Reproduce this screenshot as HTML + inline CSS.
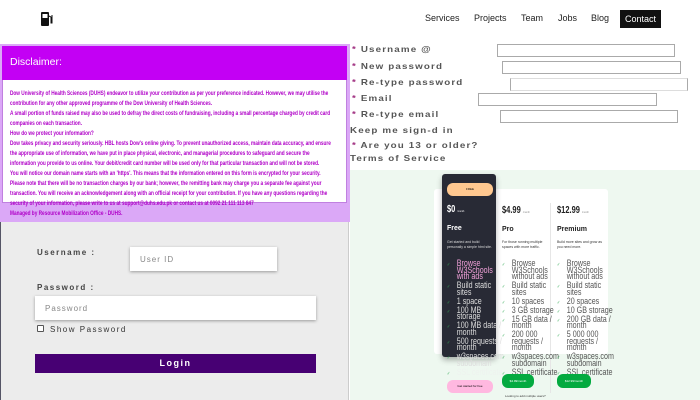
<!DOCTYPE html>
<html><head><meta charset="utf-8"><style>
*{margin:0;padding:0;box-sizing:border-box}
body{width:700px;height:400px;overflow:hidden;background:#fff;font-family:"Liberation Sans",sans-serif;position:relative}
.a{position:absolute}
.nav{font-size:9px;color:#222;top:13px}
.d{font-size:6.4px;line-height:10px;color:#b000c8;transform:scaleX(.74);transform-origin:0 0;width:500px;white-space:nowrap;font-weight:bold}
.lbl{font-size:8px;letter-spacing:1.5px;color:#444;font-weight:bold}
.inp{background:#fff;box-shadow:0 1px 3px rgba(0,0,0,.35);font-size:8px;color:#888;letter-spacing:1px}
.sl{font-size:8.5px;font-weight:bold;color:#555;letter-spacing:1px;transform:scaleX(1.15);transform-origin:0 0}
.sl b{color:#a03080}
.si{border:1px solid #aaa;height:13px;background:#fff}
.f{font-size:9.5px;line-height:6.5px;transform:scaleX(.75);transform-origin:0 0;width:75px}
.f div{margin-bottom:2.5px;position:relative;padding-left:13px}
.f div:before{content:"✓";position:absolute;left:0;font-size:5px;top:1px;color:#3a5}
.p{font-size:10px;font-weight:bold;transform:scaleX(.75);transform-origin:0 0}
.sm{font-size:3.5px;line-height:5px;width:60px}
</style></head><body>
<svg class="a" style="left:40px;top:11px" width="14" height="16" viewBox="0 0 14 16"><rect x="1" y="1" width="8" height="14" rx="1" fill="#111"/><rect x="2.5" y="3" width="5" height="4" fill="#fff"/><path d="M9 5 L11 6 L11 12 L12 12 L12 4" stroke="#111" fill="none" stroke-width="1"/></svg>
<div class="a nav" style="left:425px">Services</div>
<div class="a nav" style="left:474px">Projects</div>
<div class="a nav" style="left:521px">Team</div>
<div class="a nav" style="left:558px">Jobs</div>
<div class="a nav" style="left:591px">Blog</div>
<div class="a" style="left:620px;top:10px;width:41px;height:18px;background:#111;color:#fff;font-size:9px;text-align:center;line-height:18px">Contact</div>

<div class="a" style="left:0;top:44px;width:350px;height:178px;background:#dba8f7"></div>
<div class="a" style="left:2px;top:46px;width:345px;height:157px;background:#fff;border:1px solid #c080e0"></div>
<div class="a" style="left:2px;top:46px;width:345px;height:34px;background:#c300f4"></div>
<div class="a" style="left:10px;top:56px;color:#fff;font-size:10.5px">Disclaimer:</div>
<div class="a d" style="left:10px;top:89px">Dow University of Health Sciences (DUHS) endeavor to utilize your contribution as per your preference indicated. However, we may utilise the<br>contribution for any other approved programme of the Dow University of Health Sciences.<br>A small portion of funds raised may also be used to defray the direct costs of fundraising, including a small percentage charged by credit card<br>companies on each transaction.<br>How do we protect your information?<br>Dow takes privacy and security seriously. HBL hosts Dow's online giving. To prevent unauthorized access, maintain data accuracy, and ensure<br>the appropriate use of information, we have put in place physical, electronic, and managerial procedures to safeguard and secure the<br>information you provide to us online. Your debit/credit card number will be used only for that particular transaction and will not be stored.<br>You will notice our domain name starts with an 'https'. This means that the information entered on this form is encrypted for your security.<br>Please note that there will be no transaction charges by our bank; however, the remitting bank may charge you a separate fee against your<br>transaction. You will receive an acknowledgement along with an official receipt for your contribution. If you have any questions regarding the<br>security of your information, please write to us at support@duhs.edu.pk or contact us at 0092 21 111 113 847<br>Managed by Resource Mobilization Office - DUHS.</div>

<div class="a" style="left:0;top:222px;width:349px;height:178px;background:#ececec;border-left:1px solid #556;border-right:1px solid #ccc"></div>
<div class="a lbl" style="left:37px;top:248px">Username :</div>
<div class="a inp" style="left:130px;top:247px;width:147px;height:24px;padding:8px 10px">User ID</div>
<div class="a lbl" style="left:37px;top:283px">Password :</div>
<div class="a inp" style="left:35px;top:296px;width:281px;height:24px;padding:8px 10px">Password</div>
<div class="a" style="left:37px;top:325px;width:7px;height:7px;border:1px solid #555;border-radius:1px;background:#fff"></div>
<div class="a lbl" style="left:50px;top:325px;font-weight:normal;color:#333">Show Password</div>
<div class="a" style="left:35px;top:354px;width:281px;height:19px;background:#470073;color:#fff;font-size:9px;letter-spacing:1.5px;text-align:center;line-height:19px;font-weight:bold">Login</div>

<div class="a sl" style="left:352px;top:44px"><b>*</b> Username @</div>
<div class="a si" style="left:497px;top:44px;width:178px"></div>
<div class="a sl" style="left:352px;top:61px"><b>*</b> New password</div>
<div class="a si" style="left:502px;top:61px;width:179px"></div>
<div class="a sl" style="left:352px;top:77px"><b>*</b> Re-type password</div>
<div class="a si" style="left:510px;top:78px;width:178px;border-color:#ddd #aaa #ddd #aaa"></div>
<div class="a sl" style="left:352px;top:93px"><b>*</b> Email</div>
<div class="a si" style="left:478px;top:93px;width:179px"></div>
<div class="a sl" style="left:352px;top:109px"><b>*</b> Re-type email</div>
<div class="a si" style="left:500px;top:110px;width:178px"></div>
<div class="a sl" style="left:350px;top:125px">Keep me sign-d in</div>
<div class="a sl" style="left:352px;top:140px"><b>*</b> Are you 13 or older?</div>
<div class="a sl" style="left:350px;top:153px">Terms of Service</div>

<div class="a" style="left:350px;top:170px;width:350px;height:230px;background:#eef8f0"></div>
<div class="a" style="left:434px;top:189px;width:174px;height:165px;background:#fff;border-radius:3px"></div>
<div class="a" style="left:550px;top:203px;width:1px;height:190px;background:#e6e6e6"></div>
<div class="a" style="left:442px;top:174px;width:54px;height:183px;background:#282a35;border-radius:3px;box-shadow:0 3px 6px rgba(0,0,0,.3)"></div>
<div class="a" style="left:447px;top:183px;width:46px;height:13px;background:#ffc890;border-radius:6px;font-size:3px;text-align:center;line-height:13px">FREE</div>
<div class="a p" style="left:447px;top:204px;color:#fff">$0 <span style="font-size:3px;font-weight:normal">/month</span></div>
<div class="a p" style="left:502px;top:205px;color:#222">$4.99 <span style="font-size:3px;font-weight:normal;color:#888">/month</span></div>
<div class="a p" style="left:557px;top:205px;color:#222">$12.99 <span style="font-size:3px;font-weight:normal;color:#888">/month</span></div>
<div class="a" style="left:447px;top:225px;color:#fff;font-size:7px;font-weight:bold">Free</div>
<div class="a" style="left:502px;top:226px;color:#222;font-size:7px;font-weight:bold">Pro</div>
<div class="a" style="left:557px;top:226px;color:#222;font-size:7px;font-weight:bold">Premium</div>
<div class="a sm" style="left:447px;top:240px;color:#ddd;width:45px">Get started and build personally a simple html site.</div>
<div class="a sm" style="left:502px;top:240px;color:#333;width:45px">For those running multiple spaces with more traffic.</div>
<div class="a sm" style="left:557px;top:240px;color:#333;width:45px">Build more sites and grow as you need more.</div>
<div class="a f" style="left:447px;top:261px;color:#ddd"><div><span style="color:#f0a0d8">Browse W3Schools with ads</span></div><div>Build static sites</div><div>1 space</div><div>100 MB storage</div><div>100 MB data / month</div><div>500 requests / month</div><div>w3spaces.com subdomain</div><div style="color:#eee8">SSL certificate</div></div>
<div class="a f" style="left:502px;top:261px;color:#555"><div>Browse W3Schools without ads</div><div>Build static sites</div><div>10 spaces</div><div>3 GB storage</div><div>15 GB data / month</div><div>200 000 requests / month</div><div>w3spaces.com subdomain</div><div>SSL certificate</div></div>
<div class="a f" style="left:557px;top:261px;color:#555"><div>Browse W3Schools without ads</div><div>Build static sites</div><div>20 spaces</div><div>10 GB storage</div><div>200 GB data / month</div><div>5 000 000 requests / month</div><div>w3spaces.com subdomain</div><div>SSL certificate</div></div>
<div class="a" style="left:447px;top:380px;width:46px;height:13px;background:#ffb8e0;border-radius:6px;font-size:3px;text-align:center;line-height:13px">Get started for free</div>
<div class="a" style="left:502px;top:374px;width:32px;height:14px;background:#04aa40;border-radius:6px;font-size:3px;color:#fff;text-align:center;line-height:14px">$4.99/month</div>
<div class="a" style="left:557px;top:374px;width:34px;height:14px;background:#04aa40;border-radius:6px;font-size:3px;color:#fff;text-align:center;line-height:14px">$12.99/month</div>
<div class="a" style="left:505px;top:394px;font-size:3px;color:#333">Looking to add multiple users?</div>
</body></html>
